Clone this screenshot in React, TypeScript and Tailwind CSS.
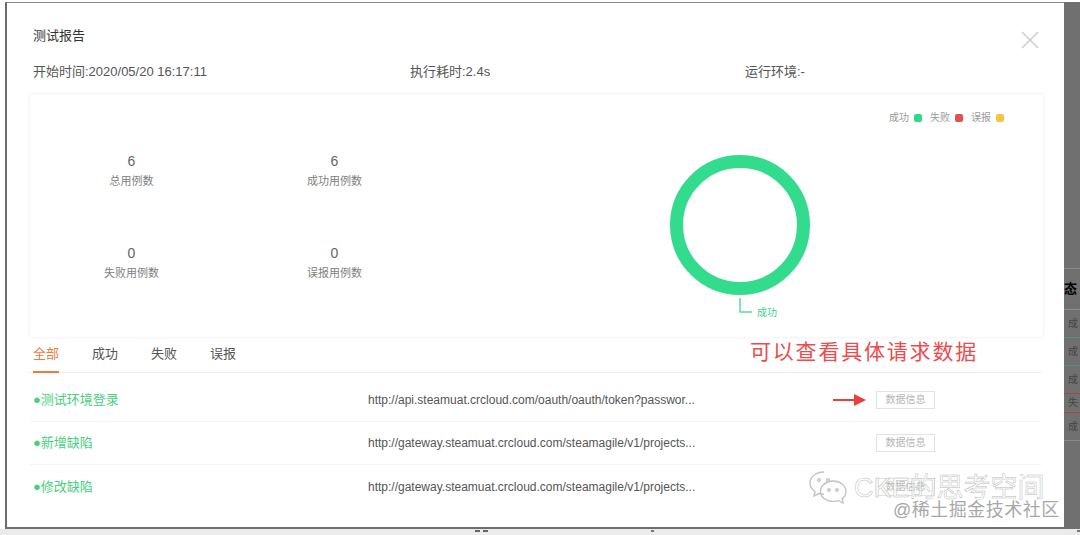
import React from 'react'

type Stat = { value: number; label: string }
type Row = { name: string; url: string }

const stats: Stat[] = [
    { value: 6, label: '总用例数' },
    { value: 6, label: '成功用例数' },
    { value: 0, label: '失败用例数' },
    { value: 0, label: '误报用例数' },
]

const rows: Row[] = [
    { name: '测试环境登录', url: 'http://api.steamuat.crcloud.com/oauth/oauth/token?passwor...' },
    { name: '新增缺陷', url: 'http://gateway.steamuat.crcloud.com/steamagile/v1/projects...' },
    { name: '修改缺陷', url: 'http://gateway.steamuat.crcloud.com/steamagile/v1/projects...' },
]

const tabs = ['全部', '成功', '失败', '误报']

const legend = [
    { label: '成功', color: 'bg-[#33d98b]' },
    { label: '失败', color: 'bg-[#e05252]' },
    { label: '误报', color: 'bg-[#f6c43f]' },
]

const font = { fontFamily: '"Liberation Sans", "Noto Sans CJK SC", sans-serif' }

const Donut = () => (
    <svg width="607" height="243" viewBox="0 0 607 243">
        <circle cx="304" cy="131" r="63.5" fill="none" stroke="#33dc8c" strokeWidth="13" />
        <polyline points="304,204 304,218 316,218" fill="none" stroke="#5fd9a0" strokeWidth="1.5" />
        <text x="321" y="222" fontSize="10" fill="#48d08e" style={font}>成功</text>
    </svg>
)

const WeChat = () => (
    <svg width="40" height="38" viewBox="0 0 40 38" fill="none" stroke="#c4c4c4" strokeWidth="1.4">
        <path d="M16 3C8 3 2 8 2 14c0 3.5 2 6.5 5 8.5L6 27l5-2.5c1.5.4 3 .6 5 .6" />
        <circle cx="11" cy="11" r="1.4" />
        <circle cx="20" cy="11" r="1.4" />
        <path d="M25 12c7 0 13 4.5 13 10.5 0 3-1.6 5.6-4 7.4l1 4.1-4.5-2.3c-1.7.5-3.4.7-5.5.7-7 0-12.5-4.5-12.5-10S18 12 25 12z" />
        <circle cx="21" cy="21" r="1.2" />
        <circle cx="29" cy="21" r="1.2" />
    </svg>
)

const App = () => {
    return (
        <div className='w-[1080px] h-[535px] bg-white flex flex-col overflow-hidden relative' style={font}>

            <div className='flex h-[529px] pt-[2px] pl-[5px]'>
                {/* modal */}
                <div className='flex-1 bg-white border-l-2 border-t border-b-2 border-l-[#6b6b6b] border-t-[#8a8a8a] border-b-[#6f6f6f] relative'>

                    <div className='pl-[26px] pr-[20px] pt-[24px]'>
                        <div className='flex justify-between items-start'>
                            <h1 className='text-[13px] leading-[18px] text-[#333]'>测试报告</h1>
                            <svg width="18" height="18" viewBox="0 0 18 18" className='mt-[4px] mr-[5px]'>
                                <path d="M1 1L17 17M17 1L1 17" stroke="#c8c8c8" strokeWidth="1.4" />
                            </svg>
                        </div>

                        <div className='flex mt-[14px] text-[13px] leading-[18px] text-[#555]'>
                            <span className='w-[377px]'>开始时间:2020/05/20 16:17:11</span>
                            <span className='w-[335px]'>执行耗时:2.4s</span>
                            <span>运行环境:-</span>
                        </div>
                    </div>

                    {/* summary card */}
                    <div className='ml-[23px] mt-[13px] w-[1013px] h-[243px] flex bg-white shadow-[0_0_3px_rgba(0,0,0,0.10)] rounded-[2px]'>
                        <div className='w-[406px] grid grid-cols-2 pt-[58px] content-start gap-y-[55px]'>
                            {stats.map((s) => (
                                <div key={s.label} className='flex flex-col items-center'>
                                    <span className='text-[14px] leading-[18px] text-[#666]'>{s.value}</span>
                                    <span className='text-[11px] leading-[16px] mt-[3px] text-[#808080]'>{s.label}</span>
                                </div>
                            ))}
                        </div>
                        <div className='relative flex-1'>
                            <div className='absolute top-[16px] right-[39px] flex items-center text-[10px] text-[#9a9a9a]'>
                                {legend.map((l, i) => (
                                    <div key={l.label} className={`flex items-center ${i > 0 ? 'ml-[8px]' : ''}`}>
                                        <span>{l.label}</span>
                                        <span className={`ml-[5px] w-[8px] h-[8px] rounded-[2px] ${l.color}`}></span>
                                    </div>
                                ))}
                            </div>
                            <Donut />
                        </div>
                    </div>

                    {/* tabs */}
                    <div className='ml-[23px] w-[1011px] mt-[7px] flex border-b border-[#ececec] relative'>
                        {tabs.map((t, i) => (
                            <div key={t} className={`ml-[3px] mr-[30px] text-[13px] leading-[18px] pt-[1px] pb-[8px] border-b-2 -mb-px ${i === 0 ? 'text-[#ef7a3c] border-[#ef7a3c]' : 'text-[#555] border-transparent'}`}>
                                {t}
                            </div>
                        ))}
                        <span className='absolute left-[720px] -top-[6px] text-[21px] leading-[28px] text-[#ec4c4c] tracking-[1.8px]'>可以查看具体请求数据</span>
                    </div>

                    {/* rows */}
                    <div className='ml-[23px] w-[1011px] mt-[6px]'>
                        {rows.map((r, i) => (
                            <div key={r.name} className={`h-[43px] flex items-center ${i < rows.length - 1 ? 'border-b border-[#f4f4f4]' : ''}`}>
                                <span className='w-[338px] pl-[3px] text-[13px] text-[#49cf7e]'>●{r.name}</span>
                                <span className='w-[508px] text-[12px] text-[#555]'>{r.url}</span>
                                <div className='relative'>
                                    {i === 0 && (
                                        <svg width="34" height="12" viewBox="0 0 34 12" className='absolute -left-[43px] top-[3px]'>
                                            <path d="M0 6H24" stroke="#e8403a" strokeWidth="2" />
                                            <path d="M21 0L33 6L21 12Z" fill="#e8403a" />
                                        </svg>
                                    )}
                                    <span className='block w-[59px] h-[18px] border border-[#e2e2e2] text-[10px] leading-[16px] text-center text-[#b5b5b5]'>数据信息</span>
                                </div>
                            </div>
                        ))}
                    </div>

                    {/* watermark */}
                    <div className='absolute left-[801px] top-[466px] flex items-center whitespace-nowrap'>
                        <WeChat />
                        <span className='ml-[6px] text-[27px] leading-[32px] text-[#c9c9c9]' style={{ WebkitTextStroke: '0.5px #bbb', color: 'rgba(255,255,255,0.6)' }}>CKE的思考空间</span>
                    </div>
                    <span className='absolute left-[886px] top-[496px] whitespace-nowrap text-[18px] leading-[22px] text-[#a8a8a8] tracking-[0.5px]'>@稀土掘金技术社区</span>
                </div>

                {/* background page on the right */}
                <div className='w-[16px] bg-[#707070] flex flex-col pt-[266px]'>
                    <div className='h-px bg-[#8a8a8a]'></div>
                    <div className='h-[40px] flex items-center text-[13px] font-bold text-black overflow-hidden'>态</div>
                    <div className='h-px bg-[#8f8f8f]'></div>
                    <div className='h-[27px] text-[10px] text-[#444] pl-[4px] leading-[27px]'>成</div>
                    <div className='h-px bg-[#5c8a84]'></div>
                    <div className='h-[27px] text-[10px] text-[#444] pl-[4px] leading-[27px]'>成</div>
                    <div className='h-px bg-[#5c8a84]'></div>
                    <div className='h-[27px] text-[10px] text-[#444] pl-[4px] leading-[27px]'>成</div>
                    <div className='h-px bg-[#a04848]'></div>
                    <div className='h-[18px] text-[10px] text-[#444] pl-[4px] leading-[18px]'>失</div>
                    <div className='h-px bg-[#a04848]'></div>
                    <div className='h-[27px] text-[10px] text-[#444] pl-[4px] leading-[27px]'>成</div>
                    <div className='h-px bg-[#8a8a8a]'></div>
                </div>
            </div>

            {/* bottom of page below modal: cut-off table text */}
            <div className='flex-1 bg-[#ebebeb] flex items-start gap-[3px] pl-[475px] pt-[1px]'>
                <span className='w-[30px] h-[2px] bg-[#666]'></span>
                <span className='w-[24px] h-[2px] bg-[#666]'></span>
                <span className='w-[20px] h-[2px] bg-[#777] ml-[160px]'></span>
                <span className='w-[14px] h-[2px] bg-[#777] ml-[420px]'></span>
            </div>
        </div>
    )
}

export default App
